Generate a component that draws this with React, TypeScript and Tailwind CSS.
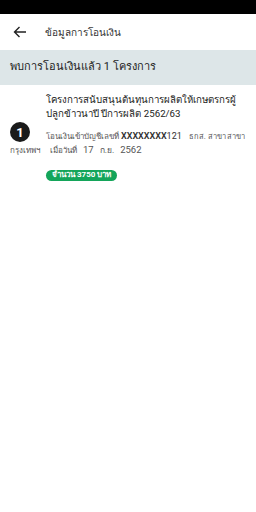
import React from 'react';

export default function App() {
  return (
    <div className="w-[256px] h-[512px] bg-white flex flex-col font-['Roboto','Noto_Sans',sans-serif] text-[#222]">
      <div className="h-[14px] bg-black shrink-0" />
      <header className="h-[36px] flex items-center shrink-0">
        <div className="w-[45px] flex items-center pl-[13px]">
          <svg width="14" height="12" viewBox="0 0 14 12" fill="none" stroke="#222" strokeWidth="1.4">
            <path d="M13 6H1.5M6.5 1L1.5 6l5 5" />
          </svg>
        </div>
        <h1 className="text-[10px] text-[#333]">ข้อมูลการโอนเงิน</h1>
      </header>
      <div className="h-[35px] bg-[#dde6e8] flex items-center px-[10px] shrink-0">
        <p className="text-[11px] text-[#222]">พบการโอนเงินแล้ว 1 โครงการ</p>
      </div>
      <section className="pt-[8px] pl-[10px] pr-[4px]">
        <div className="flex">
          <div className="w-[36px] shrink-0 pt-[29px]">
            <div className="w-[20px] h-[20px] rounded-full bg-[#1a1a1a] text-white flex items-center justify-center text-[13px] font-bold leading-none">
              1
            </div>
          </div>
          <div className="flex-1 min-w-0">
            <p className="text-[9.7px] leading-[14px] text-[#222]">
              โครงการสนับสนุนต้นทุนการผลิตให้เกษตรกรผู้ปลูกข้าวนาปี ปีการผลิต 2562/63
            </p>
            <p className="mt-[9px] text-[8px] leading-[12px] text-[#555] whitespace-nowrap">
              โอนเงินเข้าบัญชีเลขที่{' '}
              <span className="text-[9px] text-[#333] font-semibold">XXXXXXXX</span>
              <span className="text-[9px] text-[#333]">121</span>
              <span className="ml-[7px] text-[7.5px]">ธกส. สาขา สาขา</span>
            </p>
          </div>
        </div>
        <p className="mt-[1px] h-[12px] flex items-baseline text-[8px] leading-[12px] text-[#555] whitespace-nowrap">
          <span>กรุงเทพฯ</span>
          <span className="ml-[10px]">เมื่อวันที่</span>
          <span className="ml-[6px] text-[9.5px]">17</span>
          <span className="ml-[6px] text-[8.5px]">ก.ย.</span>
          <span className="ml-[6px] text-[9.5px]">2562</span>
        </p>
        <div className="pl-[36px] mt-[4px]">
          <span className="inline-flex items-center h-[11px] px-[6px] rounded-full bg-[#14a55a] text-white text-[8px] font-bold leading-none">
            จำนวน 3750 บาท
          </span>
        </div>
      </section>
    </div>
  );
}
